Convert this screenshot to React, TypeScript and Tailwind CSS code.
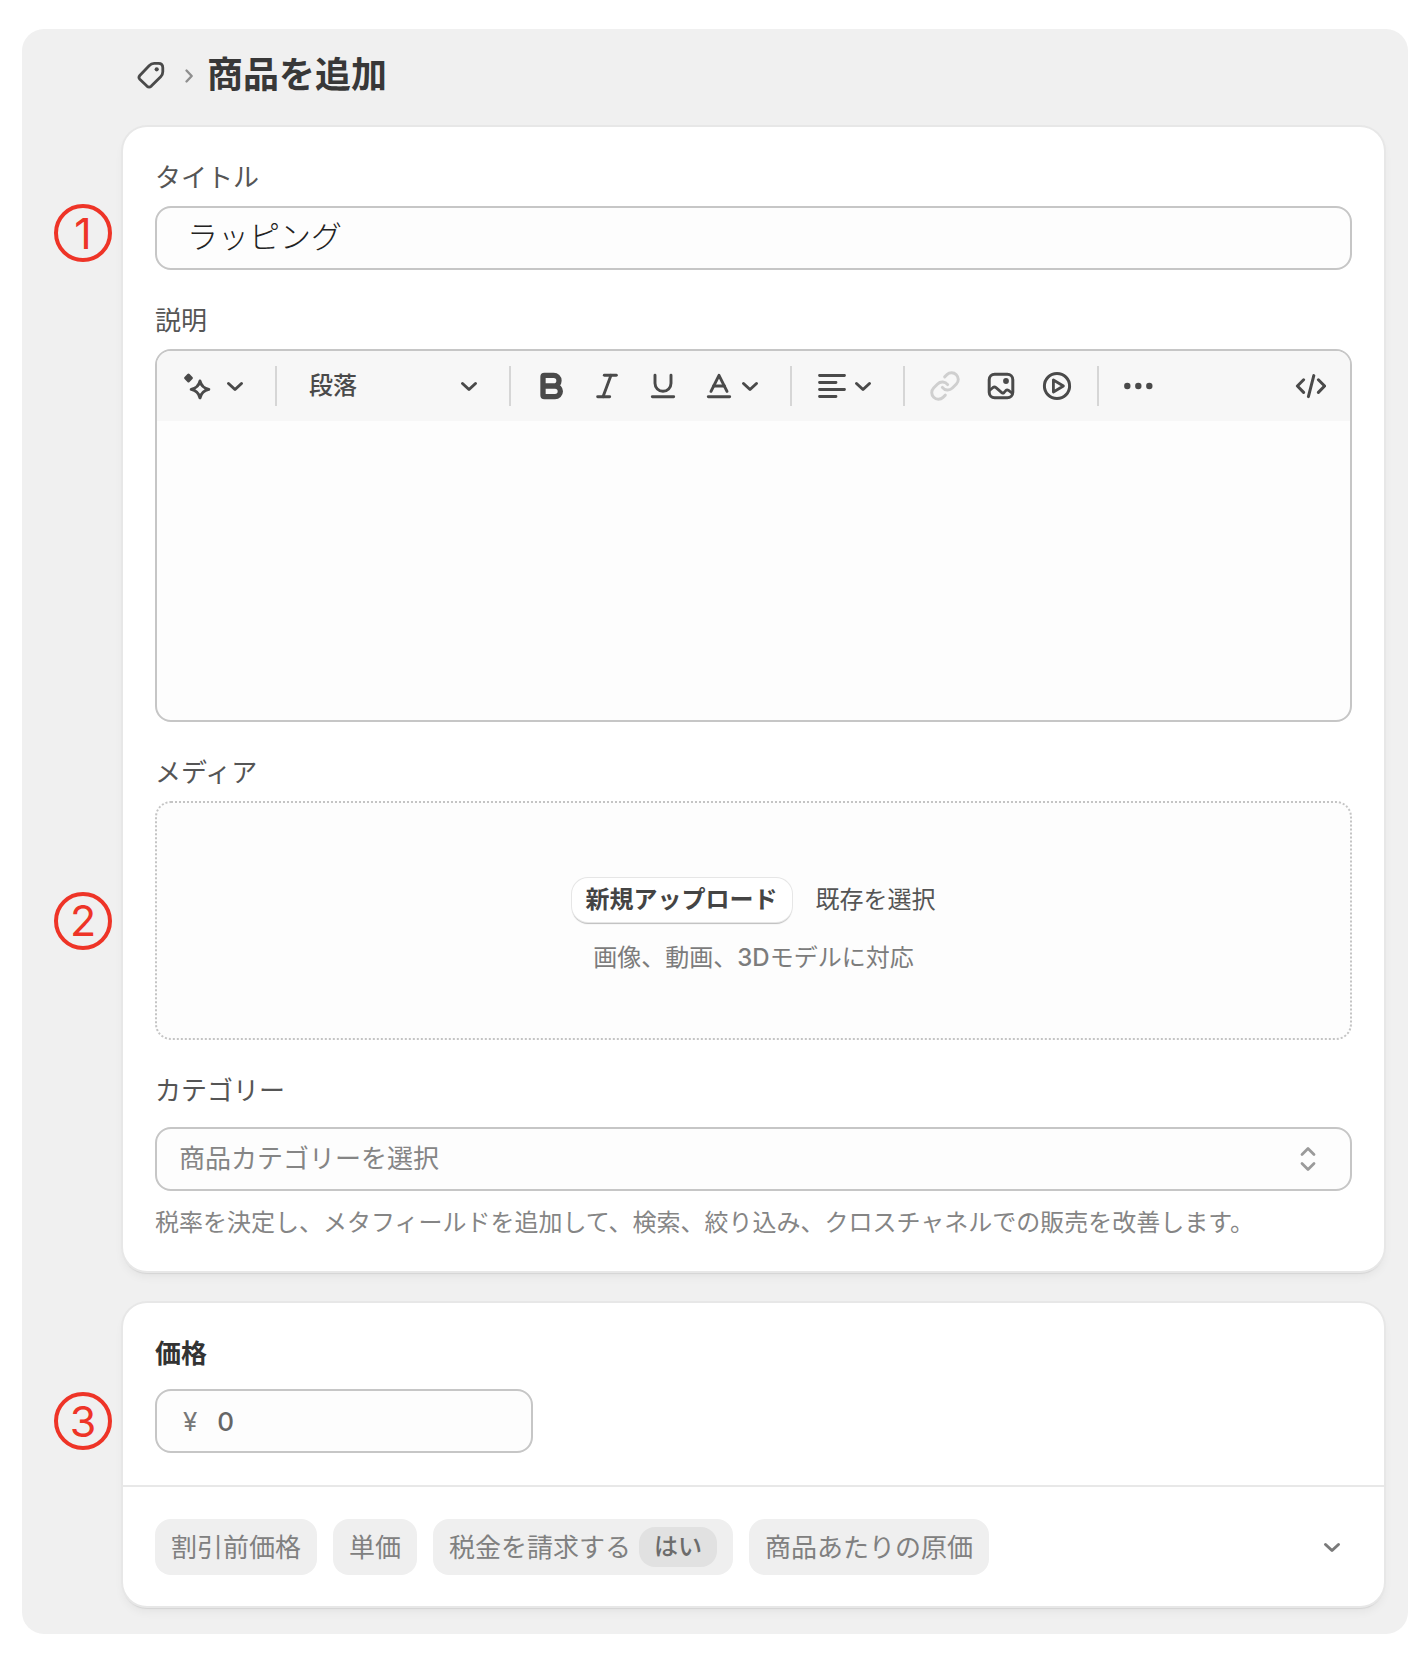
import { useState } from "react";
import type { ReactNode } from "react";
import { Baseline, Bold, Italic, Link, Underline } from "lucide-react";

function TagIcon() {
  return (
    <svg width="32" height="32" viewBox="0 0 32 32" fill="none" aria-hidden="true">
      <path
        d="M4.8 16.5 14.1 6.7Q16.3 4.4 19.1 4.4H23.5Q27.8 4.4 27.8 8.7V12.7Q27.8 15.7 25.7 17.8L16.3 27.1Q14.1 29.1 11.9 27.1L4.8 20.3Q3.1 18.5 4.8 16.5Z"
        stroke="#4a4a4a"
        strokeWidth="2.8"
        strokeLinejoin="round"
      />
      <circle cx="21.7" cy="10.3" r="2.1" fill="#4a4a4a" />
    </svg>
  );
}

function ChevronDown() {
  return (
    <svg width="20" height="20" viewBox="0 0 20 20" fill="none" aria-hidden="true">
      <path d="m3.5 7.5 6.5 6 6.5-6" stroke="currentColor" strokeWidth="3" strokeLinecap="round" strokeLinejoin="round" />
    </svg>
  );
}

function SparkleIcon() {
  return (
    <svg width="32" height="32" viewBox="0 0 32 32" fill="none" aria-hidden="true">
      <path
        d="M7.5 5.2 10.4 8 7.5 10.8 4.6 8Z"
        fill="currentColor"
        stroke="currentColor"
        strokeWidth="3"
        strokeLinejoin="round"
      />
      <path
        d="M19 11Q20.6 17.8 27.8 19.4Q20.6 21 19 27.8Q17.4 21 10.2 19.4Q17.4 17.8 19 11Z"
        stroke="currentColor"
        strokeWidth="3"
        strokeLinejoin="round"
      />
    </svg>
  );
}

function AlignIcon() {
  return (
    <svg width="32" height="32" viewBox="0 0 32 32" fill="none" aria-hidden="true">
      <path d="M3.5 5.5h25M3.5 12.5h16.5M3.5 19.5h25M3.5 26.5h16.5" stroke="currentColor" strokeWidth="2.8" strokeLinecap="round" />
    </svg>
  );
}

function ImageIcon() {
  return (
    <svg width="32" height="32" viewBox="0 0 32 32" fill="none" aria-hidden="true">
      <rect x="4.2" y="4.2" width="23.6" height="23.6" rx="5.5" stroke="currentColor" strokeWidth="3" />
      <circle cx="21" cy="11" r="2.9" fill="currentColor" />
      <path
        d="M4.5 20.5 8 17.5Q9.5 16.4 11 17.6L17 22.8Q18 23.5 19 22.6L20.8 20.6Q22 19.4 23.6 20.4L27.5 23.5"
        stroke="currentColor"
        strokeWidth="2.8"
      />
    </svg>
  );
}

function PlayIcon() {
  return (
    <svg width="32" height="32" viewBox="0 0 32 32" fill="none" aria-hidden="true">
      <circle cx="16" cy="16" r="12.6" stroke="currentColor" strokeWidth="3" />
      <path d="M12.4 10v12L22.4 16Z" stroke="currentColor" strokeWidth="2.8" strokeLinejoin="round" />
    </svg>
  );
}

function DotsIcon() {
  return (
    <svg width="32" height="32" viewBox="0 0 32 32" fill="currentColor" aria-hidden="true">
      <circle cx="4.3" cy="16" r="3.2" />
      <circle cx="15.3" cy="16" r="3.2" />
      <circle cx="26.3" cy="16" r="3.2" />
    </svg>
  );
}

function CodeIcon() {
  return (
    <svg width="32" height="32" viewBox="0 0 32 32" fill="none" aria-hidden="true">
      <path
        d="M9.6 9.8 3.4 16l6.2 6.4M24.4 9.8l6.2 6.2-6.2 6.4M19.8 5.6 14.4 26.6"
        stroke="currentColor"
        strokeWidth="3"
        strokeLinecap="round"
        strokeLinejoin="round"
      />
    </svg>
  );
}

/** ツールバーの区切り線 */
function Divider() {
  return <span className="h-10 w-0.5 shrink-0 bg-[#d6d6d6]" />;
}

function ToolButton({ label, className = "", children }: { label: string; className?: string; children: ReactNode }) {
  return (
    <button type="button" aria-label={label} className={`flex shrink-0 items-center ${className}`}>
      {children}
    </button>
  );
}

/** 手順番号 */
function Step({ n, className }: { n: number; className: string }) {
  return (
    <span
      className={`absolute -left-[101px] flex size-[58px] items-center justify-center rounded-full border-4 border-[#ee3427] text-[43px] leading-none text-[#ee3427] ${className}`}
    >
      {n}
    </span>
  );
}

const card = "rounded-3xl bg-white shadow-[0_0_0_2px_#e7e7e7,0_3px_1px_#d4d4d4,0_6px_10px_rgba(0,0,0,0.05)]";
const box = "rounded-2xl border-2 border-[#c6c6c6] bg-[#fdfdfd]";
const label = "block text-[26px] leading-[38px] text-[#555]";
const tag = "flex h-14 items-center rounded-2xl bg-[#efefef] px-4 text-[26px] text-[#808080]";

export default function App() {
  const [title, setTitle] = useState("ラッピング");
  const [price, setPrice] = useState("0");

  return (
    <div className="bg-white pt-[29px] pr-[18px] pb-[22px] pl-[22px] font-['Inter','Noto_Sans_CJK_JP',sans-serif]" lang="ja">
      <main className="rounded-[22px] bg-[#f0f0f0] pr-6 pb-7 pl-[101px]">
        <header className="mb-1.5 flex h-[92px] items-center pl-3">
          <a href="#products" aria-label="商品管理">
            <TagIcon />
          </a>
          <svg className="mr-3 ml-4" width="12" height="20" viewBox="0 0 12 20" fill="none" aria-hidden="true">
            <path d="m3.5 5.5 5.2 5.5L3.5 16.5" stroke="#8f8f8f" strokeWidth="2.4" strokeLinecap="round" strokeLinejoin="round" />
          </svg>
          <h1 className="text-4xl font-bold text-[#383838]">商品を追加</h1>
        </header>

        <section className={`flex flex-col gap-8 p-8 ${card}`}>
          <div className="relative">
            <label htmlFor="title" className={label}>
              タイトル
            </label>
            <input
              id="title"
              value={title}
              onChange={(e) => setTitle(e.target.value)}
              className={`mt-[9px] block h-16 w-full px-[30px] pb-2 text-[31px] font-light text-[#222] ${box}`}
            />
            <Step n={1} className="bottom-2" />
          </div>

          <div>
            <label htmlFor="description" className={label}>
              説明
            </label>
            <div className={`mt-[9px] overflow-hidden ${box}`}>
              <div className="flex h-[70px] items-center gap-6 bg-[#f7f7f7] px-6 text-[#4a4a4a]">
                <ToolButton label="生成" className="gap-3 pr-1.5">
                  <SparkleIcon />
                  <ChevronDown />
                </ToolButton>
                <Divider />
                <div className="relative w-[184px] shrink-0">
                  <select aria-label="書式" className="w-full appearance-none bg-transparent pl-2 text-2xl font-medium">
                    <option>段落</option>
                  </select>
                  <span className="pointer-events-none absolute inset-y-0 right-1.5 flex items-center">
                    <ChevronDown />
                  </span>
                </div>
                <Divider />
                <ToolButton label="太字">
                  <Bold size={32} strokeWidth={4} />
                </ToolButton>
                <ToolButton label="斜体">
                  <Italic size={32} strokeWidth={2.2} />
                </ToolButton>
                <ToolButton label="下線">
                  <Underline size={32} strokeWidth={2.2} />
                </ToolButton>
                <ToolButton label="文字色" className="gap-[5px] pr-1.5">
                  <Baseline size={32} strokeWidth={2.2} />
                  <ChevronDown />
                </ToolButton>
                <Divider />
                <ToolButton label="配置" className="gap-[5px] pr-1.5">
                  <AlignIcon />
                  <ChevronDown />
                </ToolButton>
                <Divider />
                <ToolButton label="リンク" className="text-[#cfcfcf]">
                  <Link size={32} strokeWidth={2.2} />
                </ToolButton>
                <ToolButton label="画像">
                  <ImageIcon />
                </ToolButton>
                <ToolButton label="動画">
                  <PlayIcon />
                </ToolButton>
                <Divider />
                <ToolButton label="その他">
                  <DotsIcon />
                </ToolButton>
                <ToolButton label="HTML" className="ml-auto">
                  <CodeIcon />
                </ToolButton>
              </div>
              <textarea id="description" className="block h-[299px] w-full resize-none bg-transparent p-6 text-2xl outline-none" />
            </div>
          </div>

          <div>
            <h2 className={label}>メディア</h2>
            <div className="relative mt-[9px]">
              <div className="flex flex-col items-center rounded-2xl border-2 border-dotted border-[#c4c4c4] bg-[#fdfdfd] pt-[75px] pb-16 text-2xl">
                <div className="flex items-center gap-6">
                  <button
                    type="button"
                    className="h-11 rounded-2xl bg-white px-3.5 font-bold text-[#444] shadow-[0_0_0_1px_#e6e6e6,0_2px_1px_#bdbdbd]"
                  >
                    新規アップロード
                  </button>
                  <button type="button" className="text-[#555]">
                    既存を選択
                  </button>
                </div>
                <p className="mt-5 leading-8 text-[#7c7c7c]">
                  画像、動画、<span className="font-medium">3D</span>モデルに対応
                </p>
              </div>
              <Step n={2} className="inset-y-0 my-auto" />
            </div>
          </div>

          <div>
            <label htmlFor="category" className={label}>
              カテゴリー
            </label>
            <div className="relative mt-[17px]">
              <select id="category" className={`block h-16 w-full appearance-none px-[22px] pb-0.5 text-[26px] text-[#858585] ${box}`}>
                <option>商品カテゴリーを選択</option>
              </select>
              <svg
                className="pointer-events-none absolute inset-y-0 right-8 my-auto"
                width="24"
                height="28"
                viewBox="0 0 24 28"
                fill="none"
                aria-hidden="true"
              >
                <path
                  d="m6 9.5 6-6 6 6M6 18.5l6 6 6-6"
                  stroke="#9a9a9a"
                  strokeWidth="2.8"
                  strokeLinecap="round"
                  strokeLinejoin="round"
                />
              </svg>
            </div>
            <p className="mt-4 text-2xl leading-8 text-[#858585]">
              税率を決定し、メタフィールドを追加して、検索、絞り込み、クロスチャネルでの販売を改善します。
            </p>
          </div>
        </section>

        <section className={`mt-8 ${card}`}>
          <div className="px-8 pt-[31px] pb-8">
            <label htmlFor="price" className="block text-[26px] leading-10 font-bold text-[#333]">
              価格
            </label>
            <div className="relative mt-[15px] grid grid-cols-3 gap-8">
              <div className={`flex h-16 items-center gap-5 px-[26px] text-[26px] text-[#777] ${box}`}>
                <span>¥</span>
                <input
                  id="price"
                  value={price}
                  onChange={(e) => setPrice(e.target.value)}
                  className="w-full min-w-0 bg-transparent font-medium text-[#666] outline-none"
                />
              </div>
              <Step n={3} className="inset-y-0 my-auto" />
            </div>
          </div>

          <div className="flex items-center gap-4 border-t-2 border-[#e8e8e8] px-8 pt-8 pb-[31px]">
            <button type="button" className={tag}>
              割引前価格
            </button>
            <button type="button" className={tag}>
              単価
            </button>
            <button type="button" className={`gap-2 ${tag}`}>
              税金を請求する
              <span className="flex h-10 items-center rounded-2xl bg-[#e1e1e1] px-[15px] text-2xl font-medium text-[#6c6c6c]">はい</span>
            </button>
            <button type="button" className={tag}>
              商品あたりの原価
            </button>
            <button type="button" aria-label="詳細を表示" className="mr-2.5 ml-auto text-[#7a7a7a]">
              <ChevronDown />
            </button>
          </div>
        </section>
      </main>
    </div>
  );
}
